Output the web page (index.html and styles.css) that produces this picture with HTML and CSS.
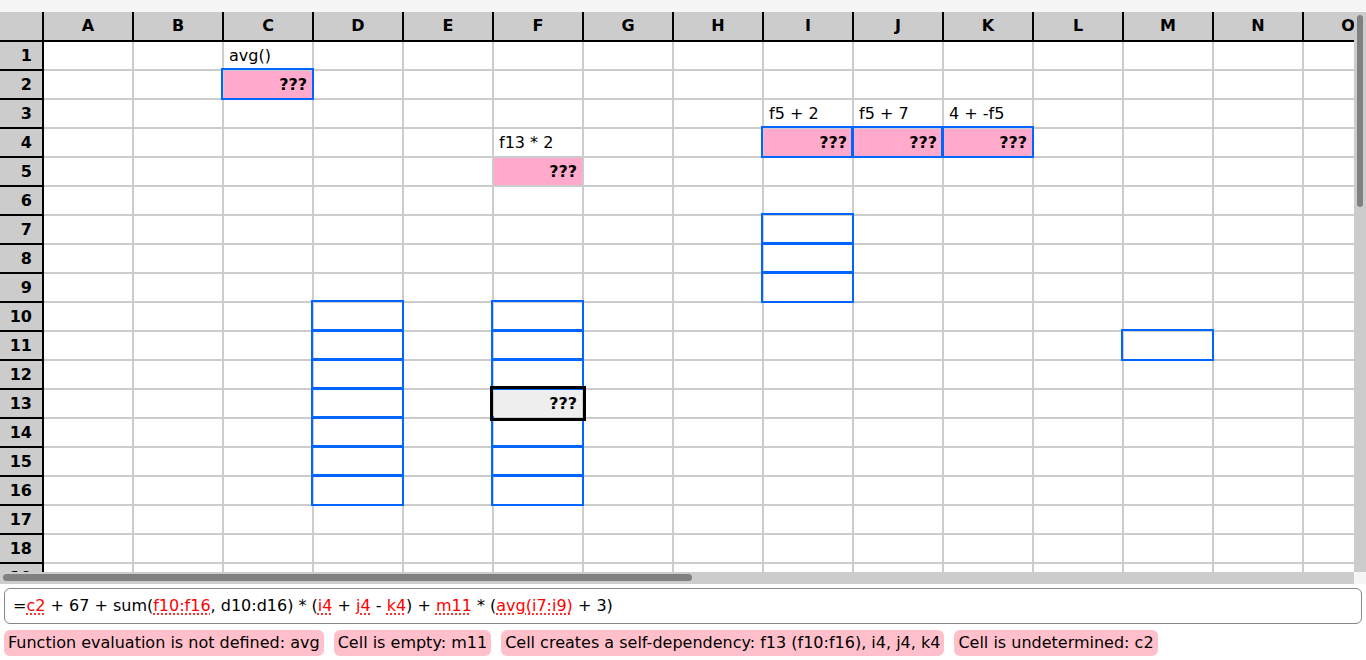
FILE: index.html
```html
<!DOCTYPE html>
<html>
<head>
<meta charset="utf-8">
<link rel="stylesheet" href="styles.css">
</head>
<body>
<div class="topbar"></div>
<div class="sheet">
  <div class="sheet-main">
    <div class="viewport">
      <div class="grid" id="grid"></div>
    </div>
    <div class="vtrack"><div class="vthumb"></div></div>
  </div>
  <div class="sheet-bottom">
    <div class="htrack"><div class="hthumb"></div></div>
    <div class="corner"></div>
  </div>
</div>
<div class="formula">=<span class="err">c2</span> + 67 + sum(<span class="err">f10:f16</span>, d10:d16) * (<span class="err">i4</span> + <span class="err">j4</span> - <span class="err">k4</span>) + <span class="err">m11</span> * (<span class="err">avg(i7:i9)</span> + 3)</div>
<div class="errors">
  <span class="chip">Function evaluation is not defined: avg</span>
  <span class="chip">Cell is empty: m11</span>
  <span class="chip">Cell creates a self-dependency: f13 (f10:f16), i4, j4, k4</span>
  <span class="chip">Cell is undetermined: c2</span>
</div>
<script src="app.js"></script>
</body>
</html>
```
FILE: app.js
```js
(function () {
  var cols = "ABCDEFGHIJKLMNO".split("");
  var grid = document.getElementById("grid");
  var text = { C1: "avg()", F4: "f13 * 2", I3: "f5 + 2", J3: "f5 + 7", K3: "4 + -f5" };
  var err = { C2: 1, F5: 1, I4: 1, J4: 1, K4: 1 };
  var value = { C2: 1, F5: 1, I4: 1, J4: 1, K4: 1, F13: 1 };
  var ring = { C2: 1, I4: 1, J4: 1, K4: 1, I7: 1, I8: 1, I9: 1, M11: 1 };
  for (var r = 10; r <= 16; r++) { ring["D" + r] = 1; ring["F" + r] = 1; }
  var html = '<div class="hd corner-hd"></div>';
  cols.forEach(function (c) { html += '<div class="hd col-hd">' + c + '</div>'; });
  for (var row = 1; row <= 19; row++) {
    html += '<div class="hd row-hd">' + row + '</div>';
    cols.forEach(function (c) {
      var id = c + row;
      var cls = "cell";
      if (err[id]) cls += " bad";
      if (ring[id]) cls += " ring";
      if (id === "F13") cls += " sel";
      var content = "";
      if (text[id]) content = '<span class="txt">' + text[id] + '</span>';
      if (value[id]) { cls += " val"; content = "???"; }
      html += '<div class="' + cls + '">' + content + '</div>';
    });
  }
  grid.innerHTML = html;
})();
```
FILE: styles.css
```css
html, body {
  margin: 0;
  padding: 0;
  background: #ffffff;
  font-family: "DejaVu Sans", sans-serif;
  color: #000;
}
.topbar {
  height: 12px;
  background: #f5f5f5;
}
.sheet {
  display: flex;
  flex-direction: column;
  width: 1366px;
}
.sheet-main {
  display: flex;
  height: 560px;
}
.viewport {
  width: 1354px;
  height: 560px;
  overflow: hidden;
}
.grid {
  display: grid;
  grid-template-columns: 44px repeat(15, 90px);
  grid-template-rows: 30px;
  grid-auto-rows: 29px;
  width: max-content;
}
.hd {
  background: #cccccc;
  box-sizing: border-box;
  font-weight: bold;
  font-size: 16px;
}
.corner-hd {
  border-right: 2px solid #000;
  border-bottom: 2px solid #000;
}
.col-hd {
  border-right: 2px solid #000;
  border-bottom: 2px solid #000;
  text-align: center;
  line-height: 28px;
}
.row-hd {
  border-right: 2px solid #000;
  border-bottom: 2px solid #000;
  text-align: right;
  padding-right: 10px;
  line-height: 27px;
}
.cell {
  box-sizing: border-box;
  border-right: 2px solid #cccccc;
  border-bottom: 2px solid #cccccc;
  background: #fff;
  font-size: 16px;
  line-height: 27px;
  padding: 0 5px;
  white-space: nowrap;
}
.cell.val {
  text-align: right;
  font-weight: bold;
}
.cell.bad {
  background: #ffaacc;
}
.cell.ring, .cell.sel {
  position: relative;
}
.cell.ring::after {
  content: "";
  position: absolute;
  left: -3px;
  top: -3px;
  right: -2px;
  bottom: -2px;
  border: 2px solid #0066ff;
  pointer-events: none;
}
.cell.sel {
  background: #eeeeee;
  z-index: 2;
}
.cell.sel::after {
  content: "";
  position: absolute;
  left: -4px;
  top: -4px;
  right: -4px;
  bottom: -4px;
  border: 3px solid #000;
  pointer-events: none;
}
.vtrack {
  width: 12px;
  height: 560px;
  background: #cccccc;
  box-sizing: border-box;
  padding: 3px 3px 0 3px;
}
.vthumb {
  width: 6px;
  height: 192px;
  border-radius: 3px;
  background: #808080;
}
.sheet-bottom {
  display: flex;
  height: 12px;
}
.htrack {
  width: 1354px;
  height: 12px;
  background: #cccccc;
  box-sizing: border-box;
  padding: 2px 3px;
}
.hthumb {
  width: 689px;
  height: 7px;
  border-radius: 4px;
  background: #808080;
}
.corner {
  width: 12px;
  height: 12px;
  background: #f5f5f5;
}
.formula {
  margin: 4px 4px 0 4px;
  height: 36px;
  box-sizing: border-box;
  border: 1px solid #888888;
  border-radius: 6px;
  padding: 0 8px;
  font-size: 16px;
  line-height: 34px;
  white-space: nowrap;
}
.err {
  color: #ff0000;
  text-decoration: underline dotted #ff0000;
  text-underline-offset: 3px;
}
.errors {
  display: flex;
  gap: 10px;
  margin: 6px 4px 0 4px;
}
.chip {
  background: #ffc0cb;
  border-radius: 6px;
  padding: 0 4px;
  height: 26px;
  line-height: 26px;
  font-size: 16px;
  white-space: nowrap;
}
```
